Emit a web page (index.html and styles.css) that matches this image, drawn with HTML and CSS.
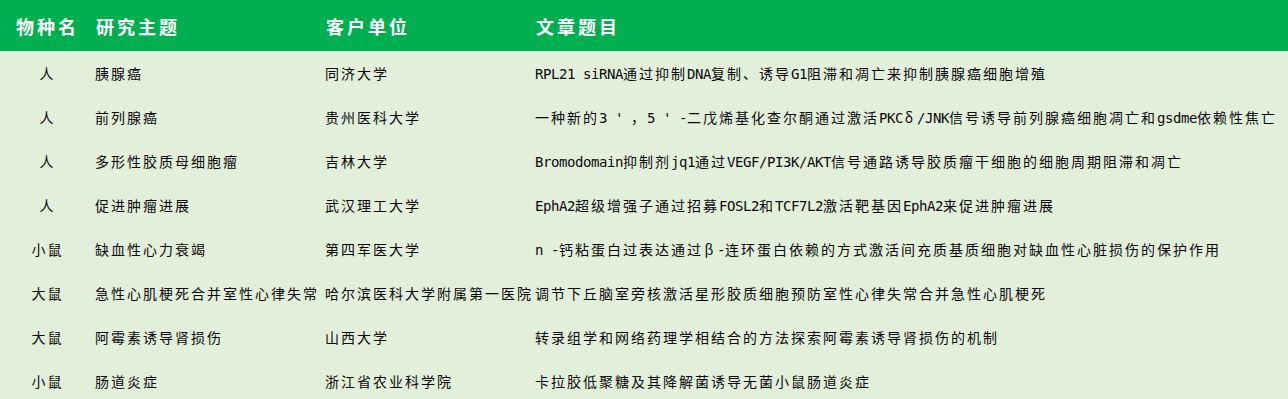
FILE: index.html
```html
<!DOCTYPE html>
<html lang="zh-CN">
<head>
<meta charset="utf-8">
<title>文章列表</title>
<link rel="stylesheet" href="styles.css">
</head>
<body>
<table class="papers">
  <colgroup>
    <col class="c-species">
    <col class="c-topic">
    <col class="c-org">
    <col class="c-title">
  </colgroup>
  <thead>
    <tr>
      <th class="species">物种名</th>
      <th>研究主题</th>
      <th>客户单位</th>
      <th>文章题目</th>
    </tr>
  </thead>
  <tbody>
    <tr>
      <td class="species">人</td>
      <td>胰腺癌</td>
      <td>同济大学</td>
      <td><span class="en">RPL21 siRNA</span>通过抑制<span class="en">DNA</span>复制、诱导<span class="en">G1</span>阻滞和凋亡来抑制胰腺癌细胞增殖</td>
    </tr>
    <tr>
      <td class="species">人</td>
      <td>前列腺癌</td>
      <td>贵州医科大学</td>
      <td>一种新的<span class="en">3 ' </span>，<span class="en">5 ' -</span>二戊烯基化查尔酮通过激活<span class="en">PKC</span><span class="gr">δ</span><span class="en">/JNK</span>信号诱导前列腺癌细胞凋亡和<span class="en">gsdme</span>依赖性焦亡</td>
    </tr>
    <tr>
      <td class="species">人</td>
      <td>多形性胶质母细胞瘤</td>
      <td>吉林大学</td>
      <td><span class="en">Bromodomain</span>抑制剂<span class="en">jq1</span>通过<span class="en">VEGF/PI3K/AKT</span>信号通路诱导胶质瘤干细胞的细胞周期阻滞和凋亡</td>
    </tr>
    <tr>
      <td class="species">人</td>
      <td>促进肿瘤进展</td>
      <td>武汉理工大学</td>
      <td><span class="en">EphA2</span>超级增强子通过招募<span class="en">FOSL2</span>和<span class="en">TCF7L2</span>激活靶基因<span class="en">EphA2</span>来促进肿瘤进展</td>
    </tr>
    <tr>
      <td class="species">小鼠</td>
      <td>缺血性心力衰竭</td>
      <td>第四军医大学</td>
      <td><span class="en">n -</span>钙粘蛋白过表达通过<span class="gr">β</span><span class="en">-</span>连环蛋白依赖的方式激活间充质基质细胞对缺血性心脏损伤的保护作用</td>
    </tr>
    <tr>
      <td class="species">大鼠</td>
      <td>急性心肌梗死合并室性心律失常</td>
      <td>哈尔滨医科大学附属第一医院</td>
      <td>调节下丘脑室旁核激活星形胶质细胞预防室性心律失常合并急性心肌梗死</td>
    </tr>
    <tr>
      <td class="species">大鼠</td>
      <td>阿霉素诱导肾损伤</td>
      <td>山西大学</td>
      <td>转录组学和网络药理学相结合的方法探索阿霉素诱导肾损伤的机制</td>
    </tr>
    <tr>
      <td class="species">小鼠</td>
      <td>肠道炎症</td>
      <td>浙江省农业科学院</td>
      <td>卡拉胶低聚糖及其降解菌诱导无菌小鼠肠道炎症</td>
    </tr>
  </tbody>
</table>
</body>
</html>
```

FILE: styles.css
```css
html, body {
  margin: 0;
  padding: 0;
  background: #e2efda;
}

body {
  font-family: "Noto Sans CJK SC", "Noto Sans", sans-serif;
  color: #0a0a0a;
}

.papers {
  width: 100%;
  border-collapse: collapse;
  border-spacing: 0;
  table-layout: fixed;
}

.c-species { width: 95px; }
.c-topic { width: 230px; }
.c-org { width: 210px; }

.papers th {
  height: 51px;
  padding: 0 0 0 1px;
  background: #00af50;
  color: #ffffff;
  font-size: 18px;
  font-weight: 700;
  letter-spacing: 3px;
  text-align: left;
  vertical-align: middle;
  white-space: nowrap;
  line-height: 20px;
}

.papers td {
  height: 44px;
  padding: 0;
  font-size: 14px;
  letter-spacing: 2px;
  line-height: 18px;
  text-align: left;
  vertical-align: middle;
  white-space: nowrap;
  overflow: visible;
}

.papers th.species,
.papers td.species {
  text-align: center;
  padding-left: 0;
}

.en {
  font-family: "DejaVu Sans Mono", "Liberation Mono", monospace;
  font-size: 14px;
  letter-spacing: -0.43px;
}

.gr {
  display: inline-block;
  width: 14px;
  text-align: center;
}
```
